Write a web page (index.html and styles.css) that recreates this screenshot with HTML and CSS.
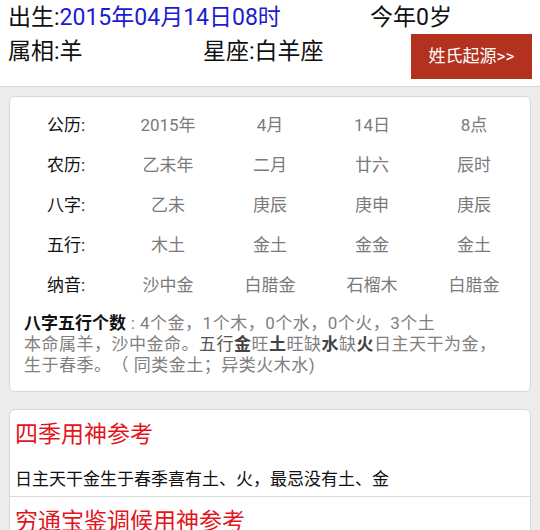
FILE: index.html
```html
<!DOCTYPE html>
<html lang="zh">
<head>
<meta charset="utf-8">
<link rel="stylesheet" href="styles.css">
</head>
<body>
<header class="head">
  <div class="row1">
    <span class="birth">出生:<span class="date">2015年04月14日08时</span></span>
    <span class="age">今年0岁</span>
  </div>
  <div class="row2">
    <span class="shu">属相:羊</span>
    <span class="xing">星座:白羊座</span>
    <a class="btn">姓氏起源&gt;&gt;</a>
  </div>
</header>
<main class="page">
  <section class="card info">
    <div class="grid">
      <span class="lab">公历:</span><span>2015年</span><span>4月</span><span>14日</span><span>8点</span>
      <span class="lab">农历:</span><span>乙未年</span><span>二月</span><span>廿六</span><span>辰时</span>
      <span class="lab">八字:</span><span>乙未</span><span>庚辰</span><span>庚申</span><span>庚辰</span>
      <span class="lab">五行:</span><span>木土</span><span>金土</span><span>金金</span><span>金土</span>
      <span class="lab">纳音:</span><span>沙中金</span><span>白腊金</span><span>石榴木</span><span>白腊金</span>
    </div>
    <p class="desc"><b class="k">八字五行个数</b> : 4个金，1个木，0个水，0个火，3个土<br>本命属羊，沙中金命。<span class="m">五行</span><b>金</b>旺<b>土</b>旺缺<b>水</b>缺<b>火</b>日主天干为金，<br>生于春季。（ 同类金土；异类火木水)</p>
  </section>
  <section class="card sects">
    <div class="sect">
      <h2>四季用神参考</h2>
      <p>日主天干金生于春季喜有土、火，最忌没有土、金</p>
    </div>
    <div class="sect">
      <h2>穷通宝鉴调候用神参考</h2>
    </div>
  </section>
</main>
</body>
</html>
```
FILE: styles.css
```css
html, body {
  margin: 0;
  padding: 0;
  background: #ececec;
  font-family: Roboto, "Noto Sans CJK SC", sans-serif;
  text-spacing-trim: space-all;
}
.head {
  background: #fff;
  height: 87px;
  border-bottom: 1px solid #d6d6d6;
  padding: 1px 8px 0 8px;
  box-sizing: border-box;
  color: #111;
  font-size: 23px;
}
.row1, .row2 {
  display: flex;
  align-items: flex-start;
  line-height: 34px;
  height: 34px;
}
.birth { width: 362px; }
.date { color: #1c1cd0; }
.shu { width: 195px; }
.btn {
  margin-left: auto;
  margin-right: 0;
  width: 121px;
  height: 45px;
  line-height: 45px;
  text-align: center;
  background: #b3311f;
  color: #fff;
  font-size: 17px;
  margin-top: -1px;
}
.page {
  padding: 9px 9px 0 9px;
}
.card {
  background: #fff;
  border: 1px solid #d8d8d8;
  border-radius: 6px;
}
.info {
  padding: 6px 5px 15px 5px;
}
.grid {
  display: grid;
  grid-template-columns: repeat(5, 102px);
  grid-auto-rows: 40px;
  align-items: center;
  text-align: center;
  font-size: 17px;
  color: #7a7a7a;
}
.grid .lab { color: #111; }
.desc {
  margin: 10px 0 0 9px;
  font-size: 17px;
  line-height: 21px;
  letter-spacing: 0.5px;
  color: #808080;
  white-space: nowrap;
}
.desc .k { color: #111; font-weight: bold; letter-spacing: 0; }
.desc .m { color: #555; }
.desc b { color: #444; font-weight: bold; }
.sects {
  margin-top: 17px;
}
.sect {
  padding: 5px 5px 4px 5px;
  border-bottom: 1px solid #dadada;
}
.sect:last-child { border-bottom: 0; }
.sect h2 {
  margin: 0;
  font-size: 23px;
  line-height: 40px;
  font-weight: normal;
  color: #e3141c;
}
.sect p {
  margin: 11px 0 0 0;
  font-size: 17px;
  line-height: 26px;
  color: #111;
}
```
